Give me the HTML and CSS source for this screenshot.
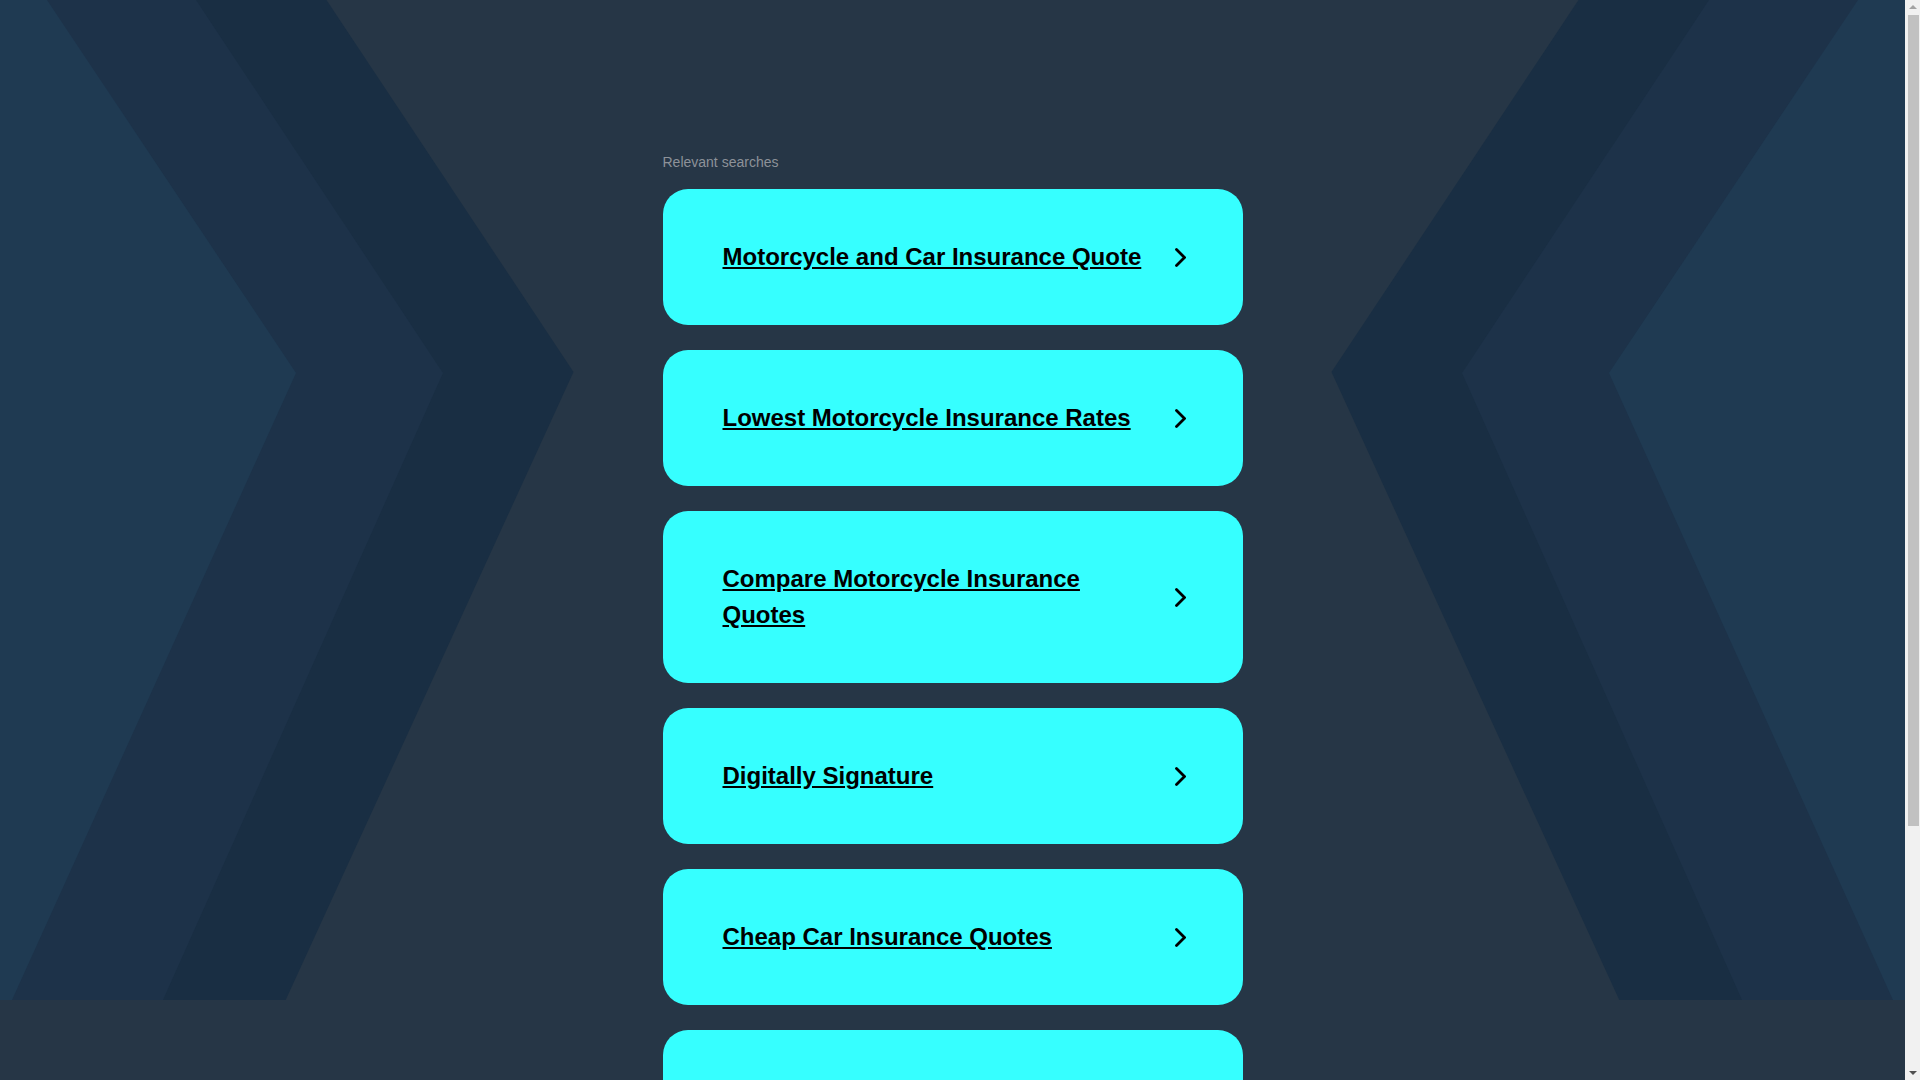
FILE: index.html
```html
<!DOCTYPE html>
<html lang="en">
<head>
<meta charset="utf-8">
<title>Relevant searches</title>
<link rel="stylesheet" href="styles.css">
</head>
<body>
<main class="content">
  <div class="label">Relevant searches</div>
  <ul class="results">
    <li class="card">
      <a class="card-link" href="#">Motorcycle and Car Insurance Quote</a>
      <svg class="chev" width="11" height="19" viewBox="0 0 11 19"><polyline points="1.5,1.5 9.5,9.5 1.5,17.5" fill="none" stroke="#000" stroke-width="2.8" stroke-linecap="round" stroke-linejoin="miter"/></svg>
    </li>
    <li class="card">
      <a class="card-link" href="#">Lowest Motorcycle Insurance Rates</a>
      <svg class="chev" width="11" height="19" viewBox="0 0 11 19"><polyline points="1.5,1.5 9.5,9.5 1.5,17.5" fill="none" stroke="#000" stroke-width="2.8" stroke-linecap="round" stroke-linejoin="miter"/></svg>
    </li>
    <li class="card">
      <a class="card-link" href="#">Compare Motorcycle Insurance Quotes</a>
      <svg class="chev" width="11" height="19" viewBox="0 0 11 19"><polyline points="1.5,1.5 9.5,9.5 1.5,17.5" fill="none" stroke="#000" stroke-width="2.8" stroke-linecap="round" stroke-linejoin="miter"/></svg>
    </li>
    <li class="card">
      <a class="card-link" href="#">Digitally Signature</a>
      <svg class="chev" width="11" height="19" viewBox="0 0 11 19"><polyline points="1.5,1.5 9.5,9.5 1.5,17.5" fill="none" stroke="#000" stroke-width="2.8" stroke-linecap="round" stroke-linejoin="miter"/></svg>
    </li>
    <li class="card">
      <a class="card-link" href="#">Cheap Car Insurance Quotes</a>
      <svg class="chev" width="11" height="19" viewBox="0 0 11 19"><polyline points="1.5,1.5 9.5,9.5 1.5,17.5" fill="none" stroke="#000" stroke-width="2.8" stroke-linecap="round" stroke-linejoin="miter"/></svg>
    </li>
    <li class="card card-empty" aria-hidden="true"></li>
  </ul>
</main>
<div class="scrollbar" aria-hidden="true">
  <span class="sb-arrow sb-up"></span>
  <span class="sb-thumb"></span>
  <span class="sb-arrow sb-down"></span>
</div>
</body>
</html>
```
FILE: styles.css
```css
html {
  background-color: #263646;
}

body {
  margin: 0 15px 0 0;
  min-height: 1400px;
  font-family: "Liberation Sans", Arial, sans-serif;
  background-color: #263646;
  background-image: url("data:image/svg+xml,%3Csvg xmlns='http://www.w3.org/2000/svg' viewBox='0 0 1905 1000' preserveAspectRatio='none'%3E%3Cpolygon fill='%23192e43' points='0,0 326.5,0 573.5,372 285.7,1000 0,1000'/%3E%3Cpolygon fill='%231d3249' points='0,0 196,0 443,373 163,1000 0,1000'/%3E%3Cpolygon fill='%231f3a52' points='0,0 47,0 296,373 12,1000 0,1000'/%3E%3Cpolygon fill='%23192e43' points='1905,0 1578.5,0 1331.5,372 1619.3,1000 1905,1000'/%3E%3Cpolygon fill='%231d3249' points='1905,0 1709,0 1462,373 1742,1000 1905,1000'/%3E%3Cpolygon fill='%231f3a52' points='1905,0 1858,0 1609,373 1893,1000 1905,1000'/%3E%3C/svg%3E");
  background-repeat: no-repeat;
  background-position: top left;
  background-size: 100% 1000px;
}

.content {
  width: 580px;
  margin: 0 auto;
  padding-top: 153px;
  padding-bottom: 40px;
}

.label {
  font-size: 14px;
  line-height: 18px;
  color: #8d9299;
  margin-bottom: 18px;
}

.results {
  list-style: none;
  margin: 0;
  padding: 0;
  display: flex;
  flex-direction: column;
  gap: 25px;
}

.card {
  display: flex;
  align-items: center;
  gap: 30px;
  padding: 50px 57px 50px 60px;
  background: #36ffff;
  border-radius: 25px;
}

.card-empty {
  height: 36px;
}

.card-link {
  flex: 1;
  min-width: 0;
  font-size: 24px;
  line-height: 36px;
  font-weight: bold;
  color: #000;
  text-decoration: underline;
}

.chev {
  flex: none;
  display: block;
}

.scrollbar {
  position: fixed;
  top: 0;
  right: 0;
  width: 15px;
  height: 100vh;
  background: #f1f1f1;
  display: flex;
  flex-direction: column;
  align-items: center;
}

.sb-arrow {
  display: block;
  width: 0;
  height: 0;
  border-left: 4px solid transparent;
  border-right: 4px solid transparent;
}

.sb-up {
  margin-top: 5px;
  border-bottom: 4px solid #a3a3a3;
}

.sb-down {
  margin-top: auto;
  margin-bottom: 5px;
  border-top: 4px solid #505050;
}

.sb-thumb {
  display: block;
  width: 11px;
  height: 811px;
  margin-top: 6px;
  margin-left: 1px;
  background: #c1c1c1;
}
```
